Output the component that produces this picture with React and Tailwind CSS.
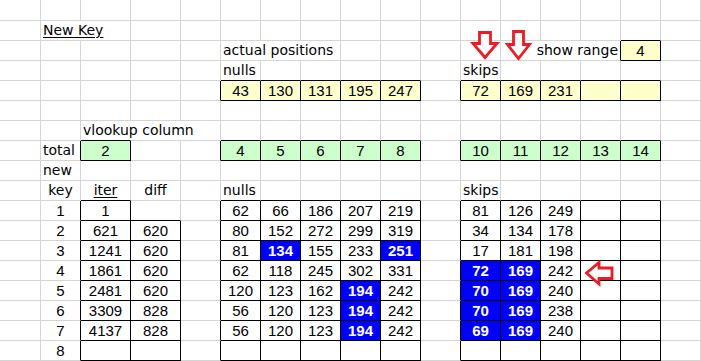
import React from "react";

const YELLOW = "yellow";
const GREEN = "green";
const BLUE = "blue";

// sheet model: row index -> col index -> cell
const cells = {};
const put = (r, c, cell) => {
  cells[`${r},${c}`] = cell;
};

const nulls = [
  [62, 66, 186, 207, 219],
  [80, 152, 272, 299, 319],
  [81, 134, 155, 233, 251],
  [62, 118, 245, 302, 331],
  [120, 123, 162, 194, 242],
  [56, 120, 123, 194, 242],
  [56, 120, 123, 194, 242],
  ["", "", "", "", ""],
];
const nullsHot = { "2,1": 1, "2,4": 1, "4,3": 1, "5,3": 1, "6,3": 1 };

const skips = [
  [81, 126, 249, "", ""],
  [34, 134, 178, "", ""],
  [17, 181, 198, "", ""],
  [72, 169, 242, "", ""],
  [70, 169, 240, "", ""],
  [70, 169, 238, "", ""],
  [69, 169, 240, "", ""],
  ["", "", "", "", ""],
];
const skipsHot = { "3,0": 1, "3,1": 1, "4,0": 1, "4,1": 1, "5,0": 1, "5,1": 1, "6,0": 1, "6,1": 1 };

const iter = [1, 621, 1241, 1861, 2481, 3309, 4137, ""];
const diff = ["", 620, 620, 620, 620, 828, 828, ""];

put(1, 1, { text: "New Key", label: true, underline: true, overflow: true });
put(2, 5, { text: "actual positions", label: true, overflow: true });
put(2, 14, { text: "show range", label: true, overflow: true, right: true });
put(2, 15, { text: 4, fill: YELLOW, box: true });
put(3, 5, { text: "nulls", label: true });
put(3, 11, { text: "skips", label: true });
[43, 130, 131, 195, 247].forEach((v, i) => put(4, 5 + i, { text: v, fill: YELLOW, box: true }));
[72, 169, 231, "", ""].forEach((v, i) => put(4, 11 + i, { text: v, fill: YELLOW, box: true }));
put(6, 2, { text: "vlookup column", label: true, overflow: true });
put(7, 1, { text: "total", label: true });
put(7, 2, { text: 2, fill: GREEN, box: true });
[4, 5, 6, 7, 8].forEach((v, i) => put(7, 5 + i, { text: v, fill: GREEN, box: true }));
[10, 11, 12, 13, 14].forEach((v, i) => put(7, 11 + i, { text: v, fill: GREEN, box: true }));
put(8, 1, { text: "new", label: true });
put(9, 1, { text: "key", label: true, center: true });
put(9, 2, { text: "iter", label: true, center: true, underline: true });
put(9, 3, { text: "diff", label: true, center: true });
put(9, 5, { text: "nulls", label: true });
put(9, 11, { text: "skips", label: true });

for (let k = 0; k < 8; k++) {
  const r = 10 + k;
  put(r, 1, { text: k + 1 });
  put(r, 2, { text: iter[k], box: true });
  if (k > 0) put(r, 3, { text: diff[k], box: true });
  nulls[k].forEach((v, i) => {
    put(r, 5 + i, { text: v, box: true, fill: nullsHot[`${k},${i}`] ? BLUE : undefined });
  });
  skips[k].forEach((v, i) => {
    put(r, 11 + i, { text: v, box: true, fill: skipsHot[`${k},${i}`] ? BLUE : undefined });
  });
}

const boxed = (r, c) => !!cells[`${r},${c}`]?.box;

const ROWS = 18;
const COLS = 17;

function Cell({ r, c }) {
  const cell = cells[`${r},${c}`];
  const rightDark = boxed(r, c) || boxed(r, c + 1);
  const bottomDark = boxed(r, c) || boxed(r + 1, c);

  let fill = "";
  if (cell?.fill === YELLOW) fill = "bg-[#ffffcc]";
  if (cell?.fill === GREEN) fill = "bg-[#ccffcc]";
  if (cell?.fill === BLUE) fill = "bg-[#0000ff]";

  const borders = `border-r border-b ${rightDark ? "border-r-black" : "border-r-[#d4d4d4]"} ${
    bottomDark ? "border-b-black" : "border-b-[#d4d4d4]"
  }`;

  if (!cell || cell.text === "") {
    return <div className={`${borders} ${fill}`} />;
  }

  const font = cell.label
    ? "font-['DejaVu_Sans',sans-serif] text-[14px]"
    : "font-['Liberation_Sans',Arial,sans-serif] text-[15px]";
  const ink = cell.fill === BLUE ? "text-white font-bold" : "text-black";
  const line = cell.underline ? "underline underline-offset-2 decoration-1" : "";

  if (cell.overflow) {
    return (
      <div className={`${borders} ${fill} flex leading-[19px] ${cell.right ? "justify-end" : "justify-start"}`}>
        <span className={`relative z-10 shrink-0 whitespace-nowrap bg-white px-[2px] ${font} ${ink} ${line}`}>
          {cell.text}
        </span>
      </div>
    );
  }

  const align = cell.label && !cell.center ? "text-left px-[2px]" : "text-center";
  return (
    <div className={`${borders} ${fill} ${align} ${font} ${ink} leading-[19px] whitespace-nowrap`}>
      <span className={line}>{cell.text}</span>
    </div>
  );
}

function RedArrows() {
  return (
    <svg className="absolute inset-0 z-20 pointer-events-none" width="701" height="361">
      <g fill="#ffffff" stroke="#ed1c24" strokeWidth="2.8" strokeLinejoin="miter">
        <polygon points="479.5,32.5 490.5,32.5 490.5,43.5 497,43.5 485,57.5 473,43.5 479.5,43.5" />
        <polygon points="513.5,31.5 523.5,31.5 523.5,44.5 529.5,44.5 518.5,58.5 507.5,44.5 513.5,44.5" />
        <polygon points="586.5,273 599,262.5 599,268 612,268 612,278.5 599,278.5 599,284" />
      </g>
    </svg>
  );
}

export default function App() {
  const grid = [];
  for (let r = 0; r < ROWS; r++) {
    for (let c = 0; c < COLS; c++) {
      grid.push(<Cell key={`${r}-${c}`} r={r} c={c} />);
    }
  }

  return (
    <div className="relative w-[701px] h-[361px] overflow-hidden bg-white">
      <div className="grid grid-cols-[41px_40px_50px_50px_40px_repeat(12,40px)] grid-rows-[21px_repeat(17,20px)]">
        {grid}
      </div>
      <RedArrows />
    </div>
  );
}
